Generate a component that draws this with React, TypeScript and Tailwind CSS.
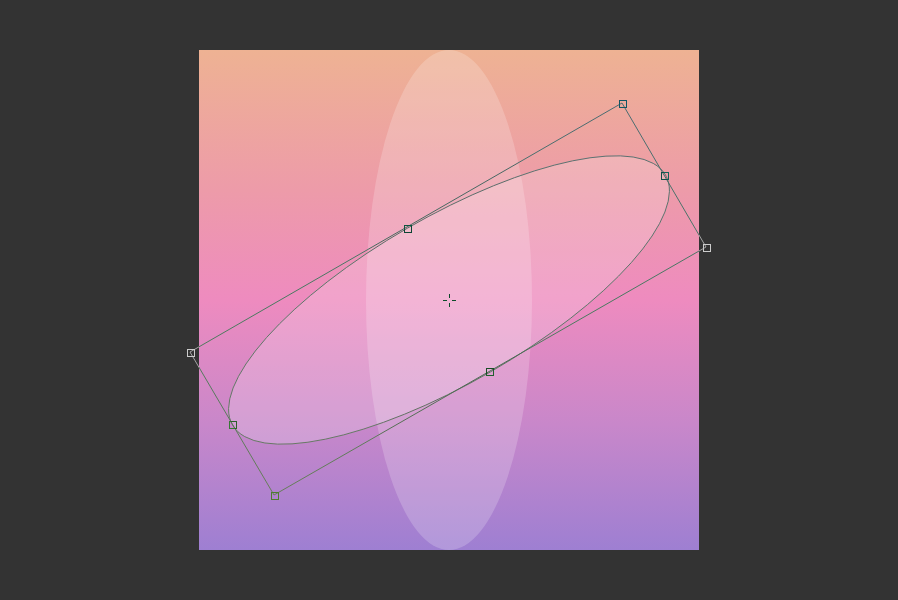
import React from 'react';

// handle positions in canvas coords (box is 500x166 rotated -30deg about 250,250)
const corners = [
  { x: 423, y: 53 },
  { x: 507, y: 197 },
  { x: 75, y: 445 },
  { x: -9, y: 302 },
];

const mids = [
  { x: 208, y: 178 },
  { x: 290, y: 321 },
  { x: 465, y: 125 },
  { x: 33, y: 374 },
];

function Handle({ x, y }: { x: number; y: number }) {
  return (
    <rect
      x={x - 2.5}
      y={y - 2.5}
      width={7}
      height={7}
      fill="none"
      stroke="#ffffff"
      strokeWidth={1}
    />
  );
}

export default function App() {
  return (
    <div className="flex h-screen w-full items-center justify-center bg-[#333333]">
      <div className="relative h-[500px] w-[500px] bg-[linear-gradient(180deg,#eeb293_0%,#ed9ba9_28%,#ee8bbf_50%,#c887ca_75%,#9e7fd2_100%)]">
        {/* shapes on the canvas */}
        <svg className="absolute inset-0" width={500} height={500} viewBox="0 0 500 500">
          <ellipse cx={250} cy={250} rx={83} ry={250} fill="rgba(255,255,255,0.2)" />
          <ellipse
            cx={250}
            cy={250}
            rx={250}
            ry={83}
            transform="rotate(-30 250 250)"
            fill="rgba(255,255,255,0.2)"
          />
        </svg>

        {/* transform overlay */}
        <svg
          className="absolute inset-0 overflow-visible mix-blend-difference"
          width={500}
          height={500}
          viewBox="0 0 500 500"
          shapeRendering="crispEdges"
        >
          <g opacity={0.75}>
            <ellipse
              cx={250}
              cy={250}
              rx={250}
              ry={83}
              transform="rotate(-30 250 250)"
              fill="none"
              stroke="#ffffff"
              strokeWidth={0.8}
              shapeRendering="geometricPrecision"
            />
            <polygon
              points="-9,302 423,53 507,197 75,445"
              fill="none"
              stroke="#ffffff"
              strokeWidth={1}
              shapeRendering="geometricPrecision"
            />
          </g>
          {corners.map((c) => (
            <Handle key={`c${c.x}`} x={c.x} y={c.y} />
          ))}
          {mids.map((m) => (
            <Handle key={`m${m.x}`} x={m.x} y={m.y} />
          ))}
          {/* centre crosshair */}
          <g stroke="#ffffff" strokeWidth={1}>
            <line x1={250.5} y1={244} x2={250.5} y2={248} />
            <line x1={250.5} y1={253} x2={250.5} y2={257} />
            <line x1={244} y1={250.5} x2={248} y2={250.5} />
            <line x1={253} y1={250.5} x2={257} y2={250.5} />
          </g>
        </svg>
      </div>
    </div>
  );
}
